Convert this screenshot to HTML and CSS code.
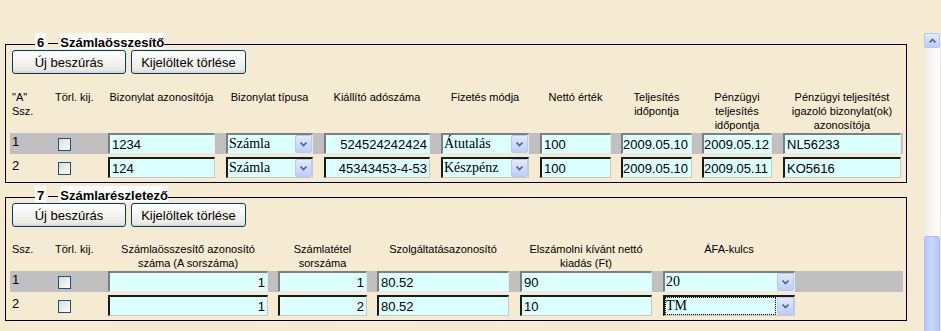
FILE: index.html
```html
<!DOCTYPE html>
<html lang="hu">
<head>
    <meta charset="UTF-8">
    <meta name="viewport" content="width=device-width, initial-scale=1.0">
    <title>Számlaösszesítő</title>
    <link rel="stylesheet" href="styles.css">
</head>
<body>
    <div class="page">
        <div class="main">
            <!-- 6. blokk -->
            <fieldset class="box">
                <legend><span class="num">6</span><span class="dash"></span><span class="title">Számlaösszesítő</span></legend>
                <div class="buttons">
                    <button class="btn">Új beszúrás</button>
                    <button class="btn wide">Kijelöltek törlése</button>
                </div>
                <div class="grid sum head">
                    <div class="ssz">"A"<br>Ssz.</div>
                    <div>Törl. kij.</div>
                    <div class="lbl">Bizonylat azonosítója</div>
                    <div class="lbl">Bizonylat típusa</div>
                    <div class="lbl">Kiállító adószáma</div>
                    <div class="lbl">Fizetés módja</div>
                    <div class="lbl">Nettó érték</div>
                    <div class="lbl p10">Teljesítés<br>időpontja</div>
                    <div class="lbl p10">Pénzügyi<br>teljesítés<br>időpontja</div>
                    <div class="lbl last">Pénzügyi teljesítést<br>igazoló bizonylat(ok)<br>azonosítója</div>
                </div>
                <div class="grid sum row sel">
                    <div class="no">1</div>
                    <div><input type="checkbox" class="chk"></div>
                    <div class="cell"><input class="inp" value="1234"></div>
                    <div class="cell"><div class="dd"><span class="val">Számla</span><span class="arr"><svg width="9" height="6" viewBox="0 0 9 6"><path d="M1.5 1.5 L4.5 4.5 L7.5 1.5" fill="none" stroke="#4d6185" stroke-width="1.6"/></svg></span></div></div>
                    <div class="cell"><input class="inp r" value="524524242424"></div>
                    <div class="cell"><div class="dd"><span class="val">Átutalás</span><span class="arr"><svg width="9" height="6" viewBox="0 0 9 6"><path d="M1.5 1.5 L4.5 4.5 L7.5 1.5" fill="none" stroke="#4d6185" stroke-width="1.6"/></svg></span></div></div>
                    <div class="cell"><input class="inp" value="100"></div>
                    <div class="cell p10"><input class="inp tight" value="2009.05.10"></div>
                    <div class="cell p10"><input class="inp tight" value="2009.05.12"></div>
                    <div class="cell last"><input class="inp" value="NL56233"></div>
                </div>
                <div class="grid sum row">
                    <div class="no">2</div>
                    <div><input type="checkbox" class="chk"></div>
                    <div class="cell"><input class="inp" value="124"></div>
                    <div class="cell"><div class="dd"><span class="val">Számla</span><span class="arr"><svg width="9" height="6" viewBox="0 0 9 6"><path d="M1.5 1.5 L4.5 4.5 L7.5 1.5" fill="none" stroke="#4d6185" stroke-width="1.6"/></svg></span></div></div>
                    <div class="cell"><input class="inp r" value="45343453-4-53"></div>
                    <div class="cell"><div class="dd"><span class="val">Készpénz</span><span class="arr"><svg width="9" height="6" viewBox="0 0 9 6"><path d="M1.5 1.5 L4.5 4.5 L7.5 1.5" fill="none" stroke="#4d6185" stroke-width="1.6"/></svg></span></div></div>
                    <div class="cell"><input class="inp" value="100"></div>
                    <div class="cell p10"><input class="inp tight" value="2009.05.10"></div>
                    <div class="cell p10"><input class="inp tight" value="2009.05.11"></div>
                    <div class="cell last"><input class="inp" value="KO5616"></div>
                </div>
            </fieldset>

            <!-- 7. blokk -->
            <fieldset class="box">
                <legend><span class="num">7</span><span class="dash"></span><span class="title">Számlarészletező</span></legend>
                <div class="buttons">
                    <button class="btn">Új beszúrás</button>
                    <button class="btn wide">Kijelöltek törlése</button>
                </div>
                <div class="grid det head">
                    <div class="ssz">Ssz.</div>
                    <div>Törl. kij.</div>
                    <div class="lbl">Számlaösszesítő azonosító<br>száma (A sorszáma)</div>
                    <div class="lbl p10">Számlatétel<br>sorszáma</div>
                    <div class="lbl p10">Szolgáltatásazonosító</div>
                    <div class="lbl">Elszámolni kívánt nettó<br>kiadás (Ft)</div>
                    <div class="lbl">ÁFA-kulcs</div>
                </div>
                <div class="grid det row sel">
                    <div class="no">1</div>
                    <div><input type="checkbox" class="chk"></div>
                    <div class="cell"><input class="inp r" value="1"></div>
                    <div class="cell p10"><input class="inp r" value="1"></div>
                    <div class="cell p10"><input class="inp" value="80.52"></div>
                    <div class="cell"><input class="inp" value="90"></div>
                    <div class="cell"><div class="dd"><span class="val">20</span><span class="arr"><svg width="9" height="6" viewBox="0 0 9 6"><path d="M1.5 1.5 L4.5 4.5 L7.5 1.5" fill="none" stroke="#4d6185" stroke-width="1.6"/></svg></span></div></div>
                </div>
                <div class="grid det row">
                    <div class="no">2</div>
                    <div><input type="checkbox" class="chk"></div>
                    <div class="cell"><input class="inp r" value="1"></div>
                    <div class="cell p10"><input class="inp r" value="2"></div>
                    <div class="cell p10"><input class="inp" value="80.52"></div>
                    <div class="cell"><input class="inp" value="10"></div>
                    <div class="cell"><div class="dd focus"><span class="val">TM</span><span class="arr"><svg width="9" height="6" viewBox="0 0 9 6"><path d="M1.5 1.5 L4.5 4.5 L7.5 1.5" fill="none" stroke="#4d6185" stroke-width="1.6"/></svg></span></div></div>
                </div>
            </fieldset>
        </div>

        <div class="sbar">
            <div class="sb-up"><svg width="9" height="6" viewBox="0 0 9 6"><path d="M1.5 4.5 L4.5 1.5 L7.5 4.5" fill="none" stroke="#4d6185" stroke-width="1.6"/></svg></div>
            <div class="sb-track"></div>
            <div class="sb-thumb"></div>
        </div>
    </div>
</body>
</html>
```

FILE: styles.css
```css
* {
    box-sizing: border-box;
}
body {
    margin: 0;
    height: 100vh;
    overflow: hidden;
    background-color: #f5ebd3;
    font-family: "Liberation Sans", Arial, sans-serif;
    color: #000;
}
.page {
    display: flex;
    height: 100%;
    padding: 33px 0 0 5px;
}
.main {
    width: 902px;
}

/* keretek */
.box {
    margin: 0;
    min-width: 0;
    border: 1px solid #000;
    padding: 0 3px 4px 4px;
}
.box + .box {
    margin-top: 3px;
}
legend {
    display: flex;
    align-items: flex-start;
    margin-left: 25px;
    padding: 0 0 6px;
    font-size: 13px;
    font-weight: bold;
    line-height: 13px;
}
.num,
.title {
    padding-top: 3px;
    background-color: #fff;
}
.num {
    padding-left: 2px;
    padding-right: 2px;
}
.dash {
    width: 10px;
    height: 1px;
    margin: 10px 2px 0;
    background-color: #000;
}

/* gombok */
.buttons {
    display: flex;
    gap: 5px;
    margin: -5px 0 0 2px;
}
.btn {
    width: 114px;
    height: 24px;
    padding: 0;
    border: 1px solid #003c74;
    border-radius: 3px;
    background: linear-gradient(#fff 0%, #f5f4f0 45%, #ebeae4 85%, #d8d3c8 100%);
    font-family: "Liberation Sans", Arial, sans-serif;
    font-size: 13px;
    color: #000;
}
.btn.wide {
    width: 115px;
}

/* táblázat */
.grid {
    display: grid;
}
.sum {
    grid-template-columns: 45px 42px 118px 98px 117px 99px 82px 81px 80px 130px;
}
.det {
    grid-template-columns: 45px 42px 171px 99px 142px 143px 143px;
}
.head {
    margin: 16px 0 1px;
    font-size: 11px;
    line-height: 14px;
}
.det.head {
    margin-top: 15px;
}
.ssz {
    padding-left: 2px;
}
.lbl {
    padding-left: 11px;
    text-align: center;
}
.row {
    height: 21px;
}
.row + .row {
    margin-top: 3px;
}
.row.sel {
    background-color: #c0c0c0;
}
.no {
    padding: 1px 0 0 2px;
    font-size: 13px;
    line-height: 15px;
}
.cell {
    padding-left: 11px;
}
.lbl.p10,
.cell.p10 {
    padding-left: 10px;
}
.last {
    padding-right: 1px;
}
.chk {
    appearance: none;
    display: block;
    width: 13px;
    height: 13px;
    margin: 5px 0 0 3px;
    border: 1px solid #1c5180;
    background: linear-gradient(135deg, #dcdcd5, #fbfbfa);
}
.inp {
    display: block;
    width: 100%;
    height: 21px;
    margin: 0;
    padding: 0 2px;
    border-style: solid;
    border-width: 2px 1px 1px 2px;
    border-color: #1a1a1a #c8c8c8 #c8c8c8 #1a1a1a;
    background-color: #dcffff;
    font-family: "Liberation Sans", Arial, sans-serif;
    font-size: 13px;
    color: #000;
}
.inp.tight {
    padding: 0;
}
.sel .inp,
.sel .dd {
    border-color: #7f7f7f #e8e8e8 #e8e8e8 #7f7f7f;
}
.r {
    text-align: right;
}
.dd {
    display: flex;
    height: 21px;
    border-style: solid;
    border-width: 2px 1px 1px 2px;
    border-color: #1a1a1a #c8c8c8 #c8c8c8 #1a1a1a;
    background-color: #dcffff;
    font-family: "Liberation Serif", "Times New Roman", serif;
    font-size: 14px;
    line-height: 17px;
}
.dd .val {
    flex: 1;
    padding-left: 1px;
}
.dd.focus .val {
    outline: 1px dotted #000;
    outline-offset: -1px;
    margin-right: 1px;
}
.arr {
    display: flex;
    align-items: center;
    justify-content: center;
    width: 17px;
    border: 1px solid #b8c8ee;
    border-radius: 2px;
    background: linear-gradient(#e0e8fd, #bccdf7);
}

/* görgetősáv */
.sbar {
    display: flex;
    flex-direction: column;
    width: 16px;
    margin-left: 17px;
}
.sb-up {
    display: flex;
    align-items: center;
    justify-content: center;
    height: 15px;
    border: 1px solid #b4c6f2;
    border-radius: 2px;
    background: linear-gradient(#e2eafe, #bccdf8);
}
.sb-track {
    height: 188px;
    background: linear-gradient(90deg, #eeede8, #fdfdfb);
}
.sb-thumb {
    flex: 1;
    border: 1px solid #a9bff1;
    border-bottom: 0;
    border-radius: 3px 3px 0 0;
    background: linear-gradient(90deg, #b6caf7, #c8d7fb 50%, #b4c8f6);
}
```
